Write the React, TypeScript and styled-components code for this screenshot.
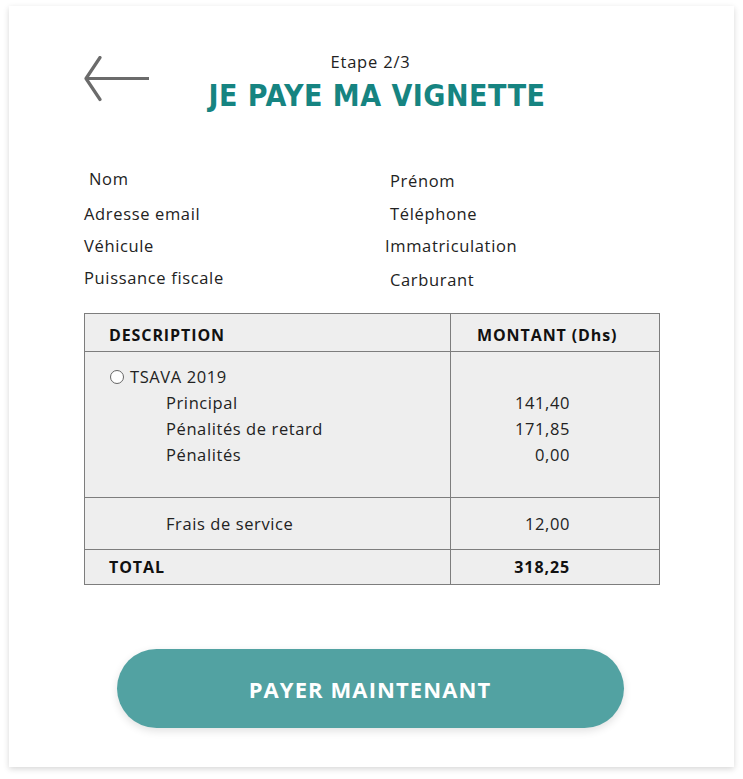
import React from "react";
import styled, { createGlobalStyle } from "styled-components";

const Global = createGlobalStyle`
  html, body { margin: 0; padding: 0; background: #ffffff; }
  body { font-family: "Open Sans", "Lato", sans-serif; color: #222; }
  * { box-sizing: border-box; }
`;

const Page = styled.div`
  width: 743px;
  height: 779px;
  padding: 6px 9px 12px 9px;
`;

const Card = styled.div`
  width: 725px;
  height: 761px;
  background: #fff;
  box-shadow: 0 2px 6px rgba(0, 0, 0, 0.16);
  padding: 44px 76px 0 75px;
  display: flex;
  flex-direction: column;
`;

const Header = styled.div`
  display: grid;
  grid-template-columns: 1fr auto 1fr;
  align-items: start;
`;

const BackButton = styled.button`
  justify-self: start;
  background: none;
  border: 0;
  padding: 0;
  margin: 6px 0 0 0;
  width: 66px;
  height: 46px;
  cursor: pointer;
  display: flex;
`;

const TitleBlock = styled.div`
  display: flex;
  flex-direction: column;
  align-items: center;
`;

const Step = styled.div`
  font-family: "Open Sans", sans-serif;
  font-size: 16.5px;
  font-weight: 400;
  letter-spacing: 0.8px;
  color: #222;
  line-height: 24px;
  margin-right: 1px;
`;

const Title = styled.h1`
  margin: 4px 0 0 12px;
  font-family: "DejaVu Sans Condensed", "DejaVu Sans", sans-serif;
  font-stretch: condensed;
  font-weight: 700;
  font-size: 30px;
  line-height: 36px;
  color: #168481;
  letter-spacing: 0.5px;
`;

const InfoGrid = styled.div`
  margin-top: 50px;
  display: grid;
  grid-template-columns: 306px 1fr;
  grid-auto-rows: 33px;
`;

const InfoLabel = styled.div<{ $dx?: number; $dy?: number }>`
  font-size: 16.5px;
  letter-spacing: 0.65px;
  color: #222;
  line-height: 33px;
  transform: translate(${(p) => p.$dx ?? 0}px, ${(p) => p.$dy ?? 0}px);
`;

const Table = styled.table`
  margin-top: 17px;
  width: 575px;
  border-collapse: collapse;
  background: #eeeeee;
  font-size: 16.5px;
  color: #222;
  table-layout: fixed;
`;

const HeadCell = styled.th<{ $pad: number }>`
  border: 1px solid #7d7d7d;
  height: 38px;
  padding: 4px 0 0 ${(p) => p.$pad}px;
  text-align: left;
  font-weight: 700;
  font-size: 16px;
  letter-spacing: 0.9px;
  color: #111;
`;

const Cell = styled.td<{ $h: number; $right?: boolean; $bold?: boolean; $top?: boolean }>`
  border: 1px solid #7d7d7d;
  height: ${(p) => p.$h}px;
  vertical-align: ${(p) => (p.$top ? "top" : "middle")};
  padding: ${(p) => (p.$top ? "12px" : "0")} ${(p) => (p.$right ? "89px" : "0")} 0 24px;
  text-align: ${(p) => (p.$right ? "right" : "left")};
  font-weight: ${(p) => (p.$bold ? 700 : 400)};
  font-size: ${(p) => (p.$bold ? "16px" : "16.5px")};
  letter-spacing: ${(p) => (p.$bold ? "0.9px" : "0.6px")};
  color: ${(p) => (p.$bold ? "#111" : "#222")};
`;

const Line = styled.div<{ $indent?: boolean; $end?: boolean }>`
  line-height: 26px;
  height: 26px;
  padding-left: ${(p) => (p.$indent ? "57px" : "1px")};
  display: flex;
  align-items: center;
  justify-content: ${(p) => (p.$end ? "flex-end" : "flex-start")};
  gap: 6px;
`;

const Radio = styled.span`
  display: inline-block;
  width: 14px;
  height: 14px;
  border-radius: 50%;
  border: 1px solid #666;
  background: #fff;
`;

const PayButton = styled.button`
  align-self: center;
  margin-top: 64px;
  margin-right: 2px;
  width: 507px;
  height: 79px;
  border: 0;
  border-radius: 40px;
  background: #52a2a2;
  color: #fff;
  font-family: "Open Sans", sans-serif;
  font-weight: 700;
  font-size: 22px;
  letter-spacing: 1.1px;
  box-shadow: 0 3px 8px rgba(0, 0, 0, 0.12);
  cursor: pointer;
`;

const rows = [
  { label: "Principal", amount: "141,40" },
  { label: "Pénalités de retard", amount: "171,85" },
  { label: "Pénalités", amount: "0,00" },
];

export default function App() {
  return (
    <Page>
      <Global />
      <Card>
        <Header>
          <BackButton aria-label="Retour">
            <svg width="66" height="46" viewBox="0 0 66 46" fill="none">
              <path d="M65 22.5H3" stroke="#6b6b6b" strokeWidth="3.2" />
              <path d="M16 1.5L2 22.5L16 43.5" stroke="#6b6b6b" strokeWidth="3.2" strokeLinecap="round" strokeLinejoin="round" />
            </svg>
          </BackButton>
          <TitleBlock>
            <Step>Etape 2/3</Step>
            <Title>JE PAYE MA VIGNETTE</Title>
          </TitleBlock>
          <div />
        </Header>

        <InfoGrid>
          <InfoLabel $dx={5} $dy={-2}>Nom</InfoLabel>
          <InfoLabel>Prénom</InfoLabel>
          <InfoLabel>Adresse email</InfoLabel>
          <InfoLabel>Téléphone</InfoLabel>
          <InfoLabel $dy={-1}>Véhicule</InfoLabel>
          <InfoLabel $dx={-5} $dy={-1}>Immatriculation</InfoLabel>
          <InfoLabel $dy={-2}>Puissance fiscale</InfoLabel>
          <InfoLabel>Carburant</InfoLabel>
        </InfoGrid>

        <Table>
          <colgroup>
            <col style={{ width: 366 }} />
            <col style={{ width: 209 }} />
          </colgroup>
          <thead>
            <tr>
              <HeadCell $pad={24}>DESCRIPTION</HeadCell>
              <HeadCell $pad={26}>MONTANT (Dhs)</HeadCell>
            </tr>
          </thead>
          <tbody>
            <tr>
              <Cell $h={146} $top>
                <Line>
                  <Radio />
                  TSAVA 2019
                </Line>
                {rows.map((r) => (
                  <Line key={r.label} $indent>
                    {r.label}
                  </Line>
                ))}
              </Cell>
              <Cell $h={146} $top $right>
                <Line />
                {rows.map((r) => (
                  <Line key={r.label} $end>
                    {r.amount}
                  </Line>
                ))}
              </Cell>
            </tr>
            <tr>
              <Cell $h={52}>
                <Line $indent>Frais de service</Line>
              </Cell>
              <Cell $h={52} $right>12,00</Cell>
            </tr>
            <tr>
              <Cell $h={35} $bold>TOTAL</Cell>
              <Cell $h={35} $right $bold>318,25</Cell>
            </tr>
          </tbody>
        </Table>

        <PayButton>PAYER MAINTENANT</PayButton>
      </Card>
    </Page>
  );
}
